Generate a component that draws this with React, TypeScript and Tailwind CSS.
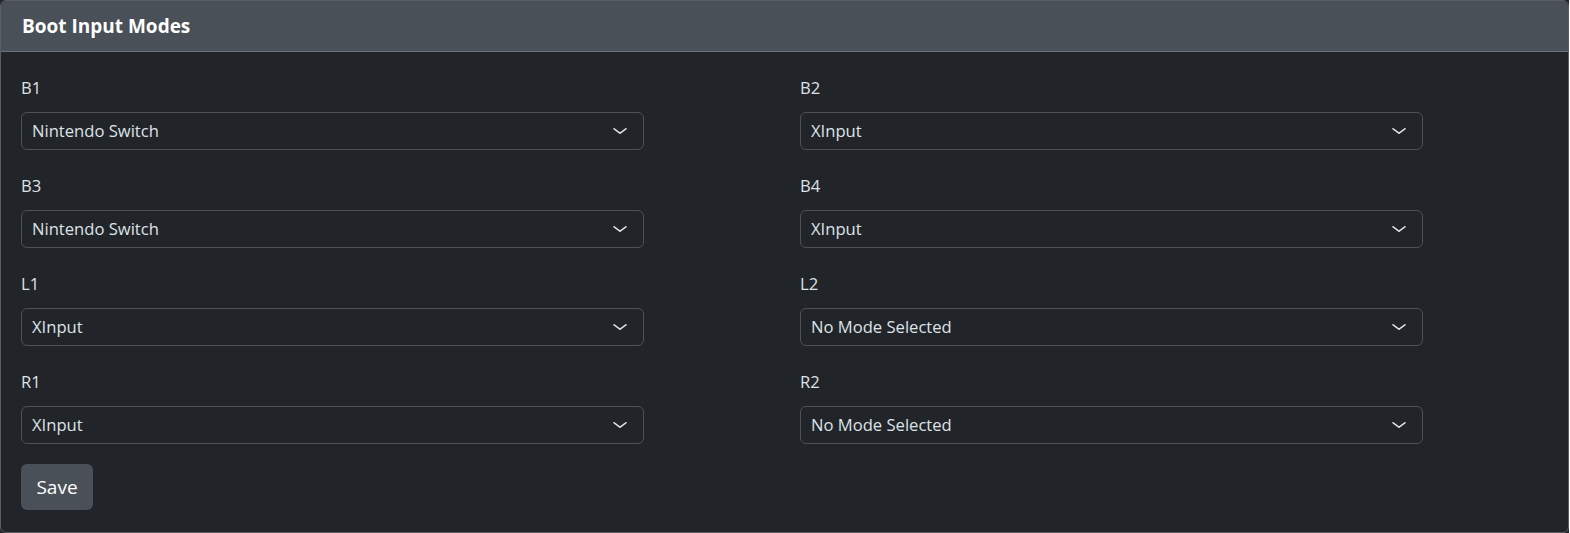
import { useState } from "react";

const MODES = ["No Mode Selected", "XInput", "Nintendo Switch", "PS3/DirectInput", "PS4", "Keyboard"];

const FIELDS: { key: string; initial: string }[] = [
  { key: "B1", initial: "Nintendo Switch" },
  { key: "B2", initial: "XInput" },
  { key: "B3", initial: "Nintendo Switch" },
  { key: "B4", initial: "XInput" },
  { key: "L1", initial: "XInput" },
  { key: "L2", initial: "No Mode Selected" },
  { key: "R1", initial: "XInput" },
  { key: "R2", initial: "No Mode Selected" },
];

function ModeSelect({ label, value, onChange }: { label: string; value: string; onChange: (v: string) => void }) {
  return (
    <div className="w-[623px]">
      <label className="block h-6 leading-6 mb-3 text-[16.6px] text-[#dee2e6]">{label}</label>
      <div className="relative">
        <select
          value={value}
          onChange={e => onChange(e.target.value)}
          className="block w-full h-[38px] appearance-none bg-[#212529] border border-[#4d5257] rounded-md pl-[10px] pr-10 text-[16.6px] text-[#dee2e6] focus:outline-none"
        >
          {MODES.map(m => <option key={m} value={m}>{m}</option>)}
        </select>
        <svg
          className="absolute right-[16px] top-[13px] pointer-events-none"
          width="16" height="12" viewBox="0 0 16 16" preserveAspectRatio="none"
          fill="none" stroke="#dee2e6" strokeWidth="1.7" strokeLinecap="round" strokeLinejoin="round"
        >
          <path d="m2 5 6 6 6-6" />
        </svg>
      </div>
    </div>
  );
}

export default function App() {
  const [values, setValues] = useState<Record<string, string>>(
    Object.fromEntries(FIELDS.map(f => [f.key, f.initial]))
  );

  const rows: [typeof FIELDS[number], typeof FIELDS[number]][] = [];
  for (let i = 0; i < FIELDS.length; i += 2) rows.push([FIELDS[i], FIELDS[i + 1]]);

  return (
    <div className="w-[1569px] h-[533px] bg-[#212529] font-['Segoe_UI','Open_Sans',sans-serif]">
      <div className="h-[533px] border border-[#5a5e63] rounded-md overflow-hidden bg-[#212529]">
        {/* Header */}
        <div className="h-[51px] bg-[#4a5058] border-b border-[#6c7177] flex items-center px-[21px]">
          <h2 className="text-[19px] font-bold text-white">Boot Input Modes</h2>
        </div>

        {/* Body */}
        <div className="pt-6 px-5">
          <div className="flex flex-col gap-6">
            {rows.map(([a, b]) => (
              <div key={a.key} className="flex gap-[156px]">
                <ModeSelect label={a.key} value={values[a.key]} onChange={v => setValues(s => ({ ...s, [a.key]: v }))} />
                <ModeSelect label={b.key} value={values[b.key]} onChange={v => setValues(s => ({ ...s, [b.key]: v }))} />
              </div>
            ))}
          </div>
          <button className="mt-5 h-[46px] w-[72px] rounded-md bg-[#4a5058] text-white text-[19px]">
            Save
          </button>
        </div>
      </div>
    </div>
  );
}
